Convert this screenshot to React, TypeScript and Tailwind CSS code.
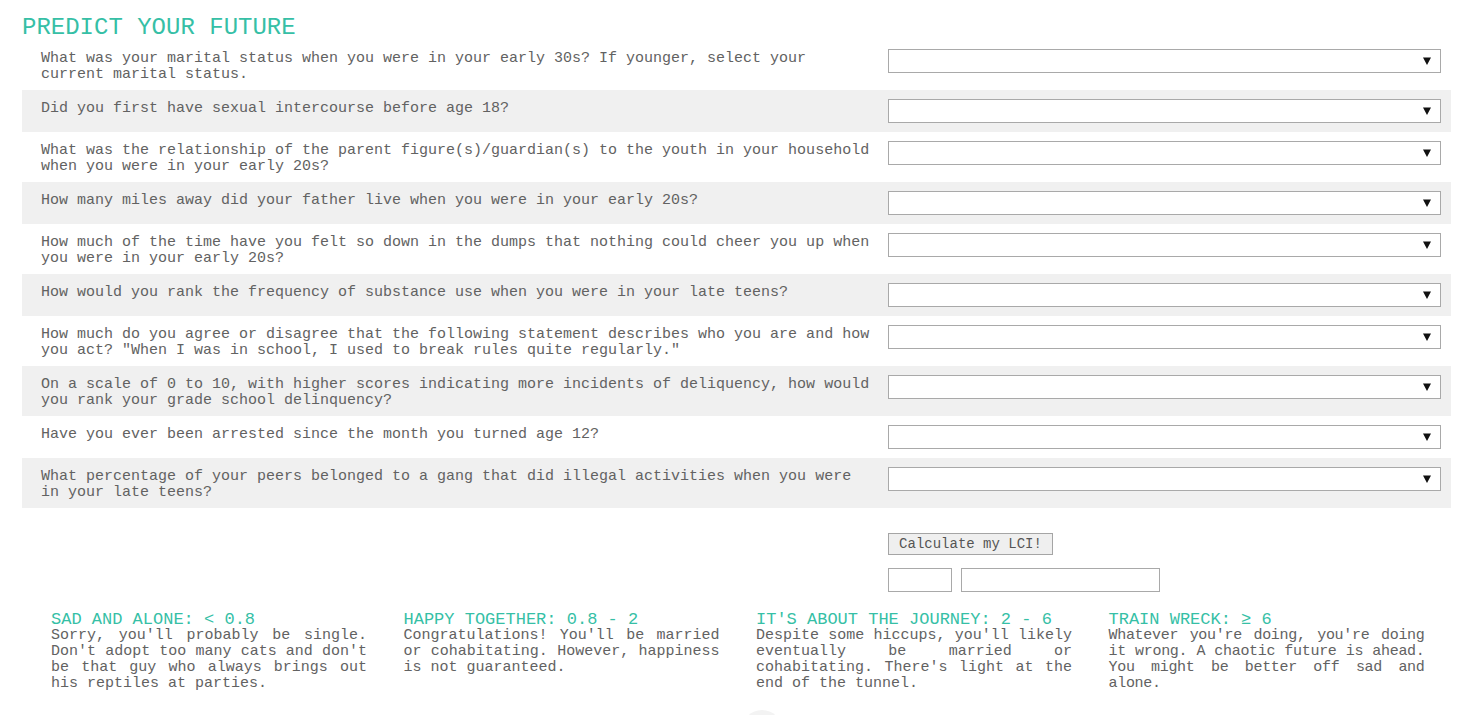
const questions = [
  "What was your marital status when you were in your early 30s? If younger, select your current marital status.",
  "Did you first have sexual intercourse before age 18?",
  "What was the relationship of the parent figure(s)/guardian(s) to the youth in your household when you were in your early 20s?",
  "How many miles away did your father live when you were in your early 20s?",
  "How much of the time have you felt so down in the dumps that nothing could cheer you up when you were in your early 20s?",
  "How would you rank the frequency of substance use when you were in your late teens?",
  'How much do you agree or disagree that the following statement describes who you are and how you act? "When I was in school, I used to break rules quite regularly."',
  "On a scale of 0 to 10, with higher scores indicating more incidents of deliquency, how would you rank your grade school delinquency?",
  "Have you ever been arrested since the month you turned age 12?",
  "What percentage of your peers belonged to a gang that did illegal activities when you were in your late teens?",
];

const outcomes = [
  {
    title: "SAD AND ALONE: < 0.8",
    body: "Sorry, you'll probably be single. Don't adopt too many cats and don't be that guy who always brings out his reptiles at parties.",
    tight: false,
  },
  {
    title: "HAPPY TOGETHER: 0.8 - 2",
    body: "Congratulations! You'll be married or cohabitating. However, happiness is not guaranteed.",
    tight: false,
  },
  {
    title: "IT'S ABOUT THE JOURNEY: 2 - 6",
    body: "Despite some hiccups, you'll likely eventually be married or cohabitating. There's light at the end of the tunnel.",
    tight: false,
  },
  {
    title: "TRAIN WRECK: ≥ 6",
    body: "Whatever you're doing, you're doing it wrong. A chaotic future is ahead. You might be better off sad and alone.",
    tight: true,
  },
];

function FakeSelect() {
  return (
    <div className="flex h-[24px] flex-1 items-center justify-end border border-[#a9a9a9] bg-white pr-[9px]">
      <svg width="8" height="8" viewBox="0 0 8 8">
        <path d="M0 0.5 H8 L4 8 Z" fill="#111" />
      </svg>
    </div>
  );
}

export default function App() {
  return (
    <div
      className="min-h-screen bg-white text-[#626262]"
      style={{ fontFamily: '"Liberation Mono", "DejaVu Sans Mono", monospace' }}
    >
      <div className="ml-[22px] w-[1429px]">
        <h1 className="pt-[15px] text-[24px] leading-[25px] text-[#36bfa6]">
          PREDICT YOUR FUTURE
        </h1>

        <div>
          {questions.map((q, i) => (
            <div
              key={i}
              className={[
                "flex items-start gap-[17px] py-[9px] pl-[19px] pr-[10px]",
                i % 2 === 1 ? "bg-[#f0f0f0]" : "bg-white",
              ].join(" ")}
            >
              <p className="-mb-[2px] mt-[2px] w-[830px] shrink-0 text-[15px] leading-[16px]">{q}</p>
              <FakeSelect />
            </div>
          ))}
        </div>

        <div className="ml-[866px] mt-[25px] flex flex-col items-start">
          <button className="h-[22px] w-[165px] border border-[#a5a5a5] bg-[#efefef] text-[14px] leading-[20px] text-[#555]">
            Calculate my LCI!
          </button>
          <div className="mt-[13px] flex gap-[9px]">
            <div className="h-[24px] w-[64px] border border-[#a9a9a9] bg-white" />
            <div className="h-[24px] w-[199px] border border-[#a9a9a9] bg-white" />
          </div>
        </div>

        <div className="ml-[29px] mt-[20px] grid grid-cols-[repeat(4,316px)] gap-x-[36.5px]">
          {outcomes.map((o) => (
            <div key={o.title}>
              <h2 className="text-[17px] leading-[16px] text-[#36bfa6]">{o.title}</h2>
              <p
                className={[
                  "text-justify text-[15px] leading-[16px]",
                  o.tight ? "tracking-[-0.3px]" : "",
                ].join(" ")}
              >
                {o.body}
              </p>
            </div>
          ))}
        </div>

        <div className="ml-[720px] mt-[18px] h-[40px] w-[40px] rounded-full bg-[#f3f3f3]" />
      </div>
    </div>
  );
}
